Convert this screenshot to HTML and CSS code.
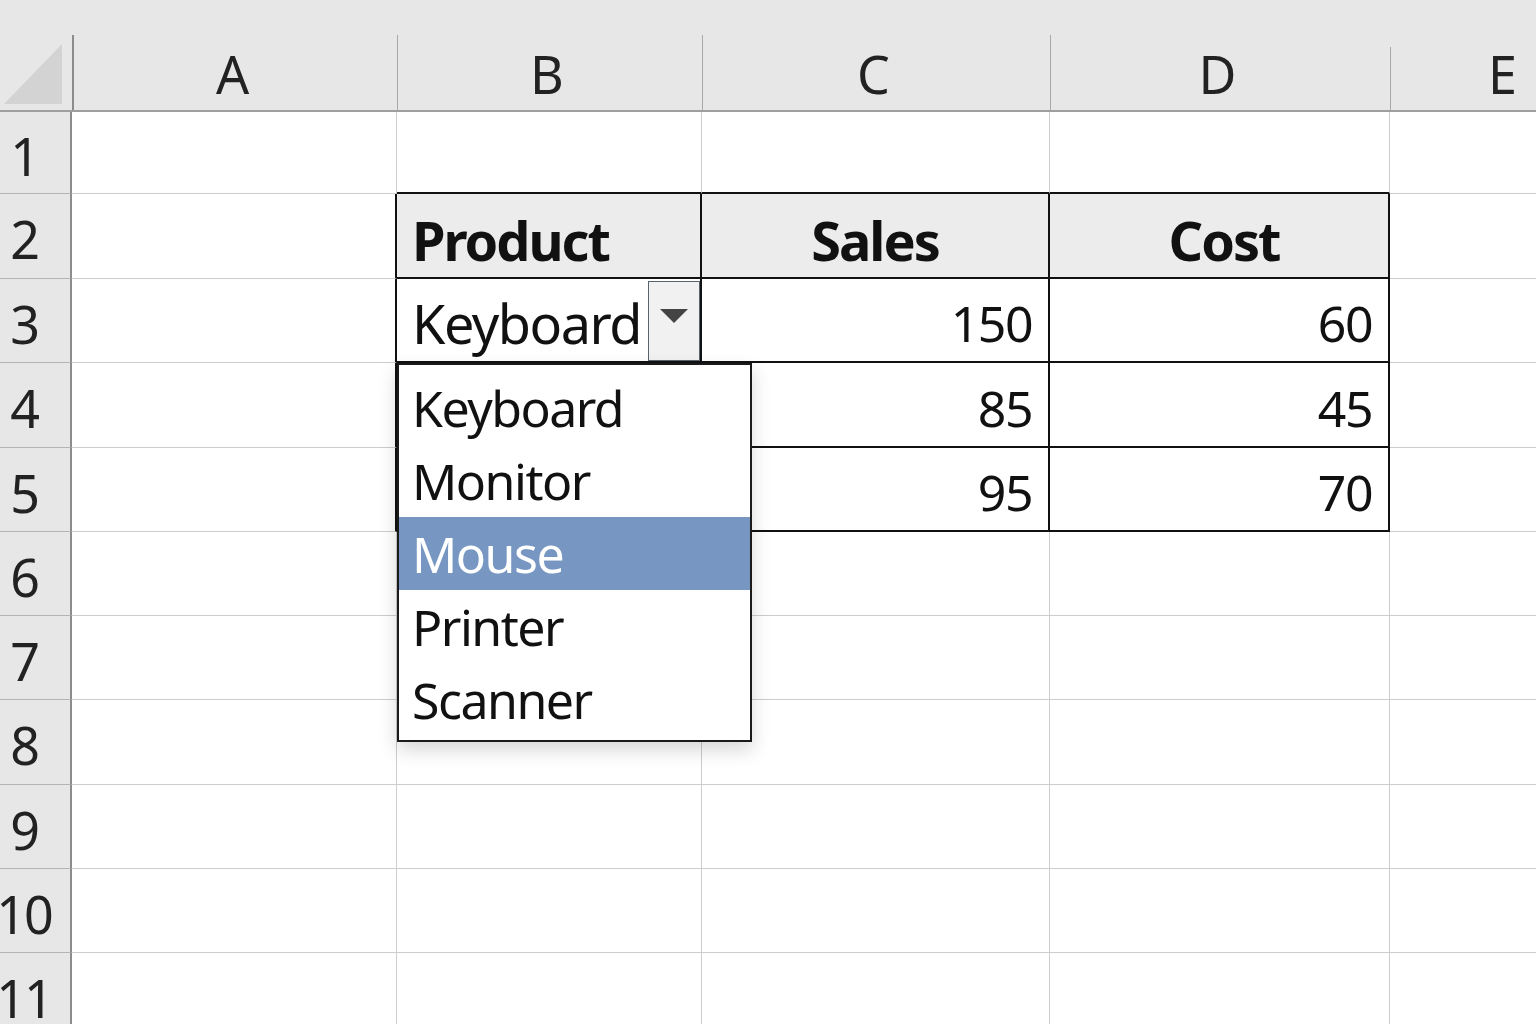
FILE: index.html
```html
<!DOCTYPE html>
<html lang="en">
<head>
    <meta charset="UTF-8">
    <meta name="viewport" content="width=device-width, initial-scale=1.0">
    <title>Products</title>
    <link rel="stylesheet" href="styles.css">
</head>
<body>
    <div class="sheet">
        <!-- Column headers -->
        <div class="corner">
            <svg width="72" height="112" viewBox="0 0 72 112">
                <polygon points="4,104 62,104 62,44" fill="#d3d3d3"/>
            </svg>
        </div>
        <div class="col-head"><span class="col-label">A</span></div>
        <div class="col-head"><span class="col-label">B</span></div>
        <div class="col-head"><span class="col-label">C</span></div>
        <div class="col-head"><span class="col-label">D</span></div>
        <div class="col-head last"><span class="col-label">E</span></div>

        <!-- Row 1 -->
        <div class="row-head">1</div>
        <div class="cell"></div>
        <div class="cell above-table"></div>
        <div class="cell above-table"></div>
        <div class="cell above-table"></div>
        <div class="cell"></div>

        <!-- Row 2: table header -->
        <div class="row-head">2</div>
        <div class="cell before-table"></div>
        <div class="cell t th left">Product</div>
        <div class="cell t th">Sales</div>
        <div class="cell t th cost">Cost</div>
        <div class="cell"></div>

        <!-- Row 3 -->
        <div class="row-head">3</div>
        <div class="cell before-table"></div>
        <div class="cell t text has-picker">
            <span class="picked">Keyboard</span>
            <span class="picker-btn">
                <svg width="30" height="16" viewBox="0 0 30 16">
                    <polygon points="1,1 29,1 15,15" fill="#444"/>
                </svg>
            </span>
        </div>
        <div class="cell t num">150</div>
        <div class="cell t num">60</div>
        <div class="cell"></div>

        <!-- Row 4 (B4 sits under the open list) -->
        <div class="row-head">4</div>
        <div class="cell before-table"></div>
        <div class="cell t text"></div>
        <div class="cell t num">85</div>
        <div class="cell t num">45</div>
        <div class="cell"></div>

        <!-- Row 5 -->
        <div class="row-head">5</div>
        <div class="cell before-table"></div>
        <div class="cell t text"></div>
        <div class="cell t num">95</div>
        <div class="cell t num">70</div>
        <div class="cell"></div>

        <!-- Rows 6-11 -->
        <div class="row-head">6</div>
        <div class="cell"></div><div class="cell"></div><div class="cell"></div><div class="cell"></div><div class="cell"></div>
        <div class="row-head">7</div>
        <div class="cell"></div><div class="cell"></div><div class="cell"></div><div class="cell"></div><div class="cell"></div>
        <div class="row-head">8</div>
        <div class="cell"></div><div class="cell"></div><div class="cell"></div><div class="cell"></div><div class="cell"></div>
        <div class="row-head">9</div>
        <div class="cell"></div><div class="cell"></div><div class="cell"></div><div class="cell"></div><div class="cell"></div>
        <div class="row-head">10</div>
        <div class="cell"></div><div class="cell"></div><div class="cell"></div><div class="cell"></div><div class="cell"></div>
        <div class="row-head">11</div>
        <div class="cell"></div><div class="cell"></div><div class="cell"></div><div class="cell"></div><div class="cell"></div>

        <!-- Validation list opened from B3 -->
        <ul class="dropdown-list">
            <li>Keyboard</li>
            <li>Monitor</li>
            <li class="selected">Mouse</li>
            <li>Printer</li>
            <li>Scanner</li>
        </ul>
    </div>
</body>
</html>
```

FILE: styles.css
```css
* {
    box-sizing: border-box;
}

body {
    margin: 0;
    background-color: #fff;
    font-family: 'Noto Sans', 'Open Sans', sans-serif;
    color: #111;
    overflow: hidden;
}

.sheet {
    position: relative;
    display: grid;
    grid-template-columns: 72px 325px 305px 348px 340px 230px;
    grid-template-rows: 112px 82px 85px 84px 85px 84px 84px 84px 85px 84px 84px 84px;
    width: 1536px;
    height: 1024px;
    overflow: hidden;
}

/* header strip */
.corner, .col-head {
    background-color: #e7e7e7;
    border-bottom: 2px solid #9e9e9e;
}

.corner svg {
    display: block;
}

.col-head {
    padding-top: 35px;
    display: flex;
}

.col-head.last {
    padding-top: 47px;
}

.col-label {
    flex: 1;
    display: flex;
    align-items: flex-end;
    justify-content: center;
    padding-bottom: 10px;
    padding-right: 6px;
    border-left: 1px solid #a8a8a8;
    font-size: 52px;
    line-height: 1;
    color: #222;
}

.corner + .col-head .col-label {
    border-left: 2px solid #8c8c8c;
}

.row-head {
    background-color: #e7e7e7;
    border-right: 2px solid #8c8c8c;
    border-bottom: 1px solid #b4b4b4;
    display: flex;
    align-items: center;
    justify-content: center;
    padding-right: 22px;
    padding-top: 6px;
    font-size: 52px;
    line-height: 1;
    color: #222;
    letter-spacing: -2px;
}

.cell {
    border-right: 1px solid #cdcdcd;
    border-bottom: 1px solid #cdcdcd;
    display: flex;
    align-items: center;
    font-size: 50px;
    letter-spacing: -1.5px;
    line-height: 1;
    padding-top: 6px;
}

.above-table {
    border-bottom: 2px solid #111;
}

.before-table {
    border-right: 2px solid #111;
}

/* bordered product table */
.t {
    border-right: 2px solid #111;
    border-bottom: 2px solid #111;
}

.th {
    background-color: #ececec;
    font-weight: 700;
    font-size: 54px;
    letter-spacing: -2px;
    justify-content: center;
    padding-top: 8px;
}

.th.left {
    justify-content: flex-start;
    padding-left: 15px;
}

.th.cost {
    padding-left: 10px;
}

.text {
    padding-left: 15px;
}

.num {
    justify-content: flex-end;
    padding-right: 16px;
}

.has-picker {
    justify-content: space-between;
    padding-top: 0;
    padding-right: 0;
    align-items: stretch;
}

.picked {
    display: flex;
    align-items: center;
    padding-top: 6px;
    font-size: 54px;
}

.picker-btn {
    width: 52px;
    margin: 2px 0 0;
    background-color: #f1f1f1;
    border: 1px solid #58636e;
    display: flex;
    align-items: center;
    justify-content: center;
    padding-bottom: 10px;
}

.picker-btn svg {
    display: block;
}

.dropdown-list {
    position: absolute;
    left: 397px;
    top: 363px;
    width: 355px;
    margin: 0;
    padding: 6px 0 4px;
    list-style: none;
    background-color: #fff;
    border: 2px solid #1a1a1a;
    box-shadow: 0 8px 18px rgba(0, 0, 0, 0.16);
}

.dropdown-list li {
    height: 73px;
    display: flex;
    align-items: center;
    padding-left: 13px;
    font-size: 50px;
    letter-spacing: -1.5px;
    line-height: 1;
    color: #111;
}

.dropdown-list li.selected {
    background-color: #7797c2;
    color: #fff;
}
```
